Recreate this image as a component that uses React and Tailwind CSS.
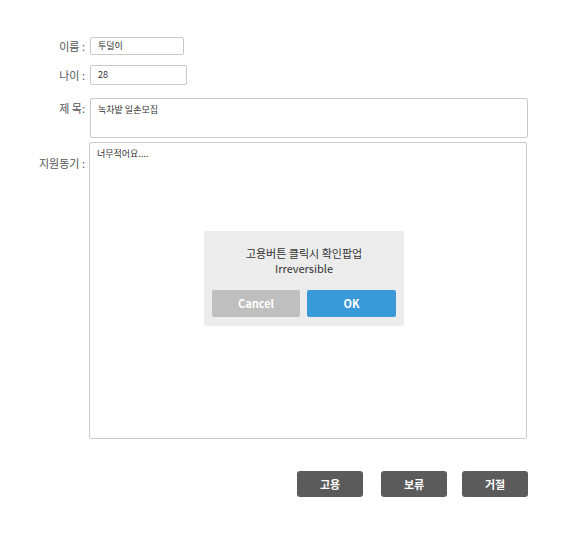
import React from "react";

const font = { fontFamily: '"Noto Sans CJK KR", "Noto Sans", sans-serif' };

const App = () => {
  return (
    <div className="w-[566px] h-[533px] bg-white relative text-[#333]" style={font}>
      <div className="pt-[37px] flex flex-col">
        {/* name */}
        <div className="flex items-center h-[18px]">
          <div className="w-[86px] text-right text-[11px] text-[#555] pr-[1px]">이름 :</div>
          <div className="ml-[4px] w-[94px] h-[18px] border border-[#c9c9c9] rounded-[2px] flex items-center px-[7px] text-[9px]">
            투덜이
          </div>
        </div>
        {/* age */}
        <div className="flex items-center h-[20px] mt-[10px]">
          <div className="w-[86px] text-right text-[11px] text-[#555] pr-[1px]">나이 :</div>
          <div className="ml-[4px] w-[97px] h-[20px] border border-[#c9c9c9] rounded-[2px] flex items-center px-[7px] text-[9px]">
            28
          </div>
        </div>
        {/* title */}
        <div className="flex mt-[13px]">
          <div className="w-[86px] text-right text-[11px] text-[#555] pt-[2px] pr-[1px]">제 목:</div>
          <div className="ml-[4px] w-[438px] h-[40px] border border-[#c9c9c9] rounded-[2px] px-[7px] pt-[4px] text-[9px]">
            녹차밭 일손모집
          </div>
        </div>
        {/* motivation */}
        <div className="flex mt-[4px]">
          <div className="w-[86px] text-right text-[11px] text-[#555] pt-[13px] pr-[1px]">지원동기 :</div>
          <div className="ml-[3px] w-[438px] h-[297px] border border-[#c9c9c9] rounded-[2px] px-[7px] pt-[4px] text-[9px]">
            너무적어요....
          </div>
        </div>
        {/* actions */}
        <div className="flex mt-[32px] pl-[297px] gap-[18px]">
          <button className="w-[66px] h-[26px] bg-[#5b5b5b] rounded-[3px] text-white text-[11px] font-bold">고용</button>
          <button className="w-[66px] h-[26px] bg-[#5b5b5b] rounded-[3px] text-white text-[11px] font-bold">보류</button>
          <button className="w-[66px] h-[26px] bg-[#5b5b5b] rounded-[3px] text-white text-[11px] font-bold -ml-[3px]">거절</button>
        </div>
      </div>

      {/* confirm popup */}
      <div className="absolute left-[204px] top-[231px] w-[200px] h-[95px] bg-[#ececec] rounded-[2px] flex flex-col items-center">
        <div className="mt-[15px] text-[11px] leading-[15px] text-center text-[#333]">
          <div>고용버튼 클릭시 확인팝업</div>
          <div>Irreversible</div>
        </div>
        <div className="flex gap-[7px] mt-[14px]">
          <button className="w-[88px] h-[27px] bg-[#bfbfbf] rounded-[2px] text-white text-[11px] font-bold">Cancel</button>
          <button className="w-[89px] h-[27px] bg-[#3a9ad9] rounded-[2px] text-white text-[11px] font-bold">OK</button>
        </div>
      </div>
    </div>
  );
};

export default App;
